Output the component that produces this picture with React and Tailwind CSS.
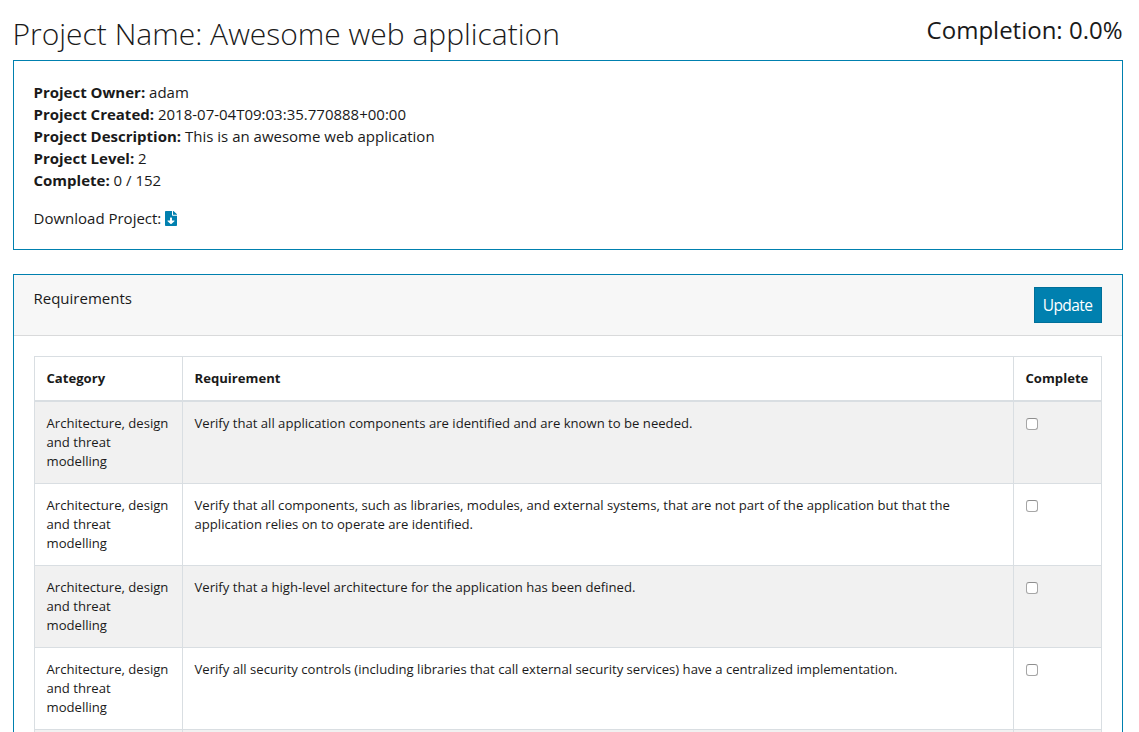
const category = "Architecture, design and threat modelling";

const requirements = [
  "Verify that all application components are identified and are known to be needed.",
  "Verify that all components, such as libraries, modules, and external systems, that are not part of the application but that the application relies on to operate are identified.",
  "Verify that a high-level architecture for the application has been defined.",
  "Verify all security controls (including libraries that call external security services) have a centralized implementation.",
];

const details = [
  ["Project Owner:", "adam"],
  ["Project Created:", "2018-07-04T09:03:35.770888+00:00"],
  ["Project Description:", "This is an awesome web application"],
  ["Project Level:", "2"],
  ["Complete:", "0 / 152"],
];

function DownloadIcon() {
  return (
    <svg viewBox="0 0 384 512" preserveAspectRatio="none" className="h-[15px] w-3" fill="currentColor" aria-hidden="true">
      <path d="M224 136V0H24C10.700 0 0 10.700 0 24v464c0 13.300 10.700 24 24 24h336c13.300 0 24-10.700 24-24V160H248c-13.200 0-24-10.800-24-24zm76.450 211.360l-96.420 95.700c-6.650 6.610-17.390 6.610-24.040 0l-96.420-95.700C73.420 337.290 80.540 320 94.820 320H160v-80c0-8.840 7.160-16 16-16h32c8.840 0 16 7.160 16 16v80h65.180c14.280 0 21.400 17.290 11.270 27.360zM377 105L279.100 7c-4.500-4.500-10.600-7-17-7H256v128h128v-6.100c0-6.300-2.500-12.400-7-16.900z" />
    </svg>
  );
}

function Row({ text, striped }) {
  return (
    <tr className={striped ? "h-[82px] bg-[#f1f1f1] align-top" : "h-[82px] bg-white align-top"}>
      <td className="border-r border-b border-[#d9dee2] py-3 pl-[11.5px] pr-3">{category}</td>
      <td className="border-r border-b border-[#d9dee2] py-3 pl-[11.5px] pr-3">{text}</td>
      <td className="border-r border-b border-[#d9dee2] pt-4 pl-3">
        <input
          type="checkbox"
          aria-label="Complete"
          className="block size-3 appearance-none rounded-[3px] border border-[#a6a6a6] border-t-[#8e8e8e] bg-white"
        />
      </td>
    </tr>
  );
}

export default function App() {
  return (
    <main className="h-[732px] overflow-hidden bg-white pl-[13px] pr-4 font-['Open_Sans',sans-serif] text-[15px] leading-[22px] text-[#1a1a1a]">
      <header className="flex h-[60px] justify-between">
        <h1 className="-ml-[0.5px] pt-[14px] text-[30px] leading-10 font-light">
          Project Name: Awesome web application
        </h1>
        <div className="pt-[14px] pr-[0.5px] text-[24px] leading-8">Completion: 0.0%</div>
      </header>

      <section className="h-[190px] border border-[#0080af] pt-5 pl-[19.5px]">
        {details.map(([label, value]) => (
          <div key={label}>
            <strong className="font-bold">{label}</strong> {value}
          </div>
        ))}
        <div className="mt-4 flex items-center gap-[3.500px]">
          <span>Download Project:</span>
          <a href="#" aria-label="Download" className="text-[#0080af]">
            <DownloadIcon />
          </a>
        </div>
      </section>

      <section className="mt-6 border border-[#0080af]">
        <div className="flex h-[61px] items-start justify-between border-b border-[#d9dadb] bg-[#f7f7f7] pt-3 pr-5 pl-[19.5px]">
          <span>Requirements</span>
          <button className="h-9 w-[68px] border border-[#006f99] bg-[#0080af] pr-px text-center text-[15.5px] tracking-[-0.6px] text-white">
            Update
          </button>
        </div>
        <div className="px-5 pt-5">
          <table className="w-[1068px] table-fixed border-separate border-spacing-0 border-t border-l border-[#d9dee2] text-[13.125px] leading-[19px]">
            <colgroup>
              <col className="w-[148px]" />
              <col className="w-[831px]" />
              <col className="w-[88px]" />
            </colgroup>
            <thead>
              <tr className="h-[45px] text-left">
                <th className="border-r border-b-2 border-[#d9dee2] pl-[11.5px] font-bold">Category</th>
                <th className="border-r border-b-2 border-[#d9dee2] pl-[11.5px] font-bold">Requirement</th>
                <th className="border-r border-b-2 border-[#d9dee2] pl-[11.5px] font-bold">Complete</th>
              </tr>
            </thead>
            <tbody>
              {requirements.map((text, i) => (
                <Row key={i} text={text} striped={i % 2 === 0} />
              ))}
              <tr className="h-[82px] bg-[#f1f1f1]">
                <td className="border-r border-[#d9dee2]" />
                <td className="border-r border-[#d9dee2]" />
                <td className="border-r border-[#d9dee2]" />
              </tr>
            </tbody>
          </table>
        </div>
      </section>
    </main>
  );
}
